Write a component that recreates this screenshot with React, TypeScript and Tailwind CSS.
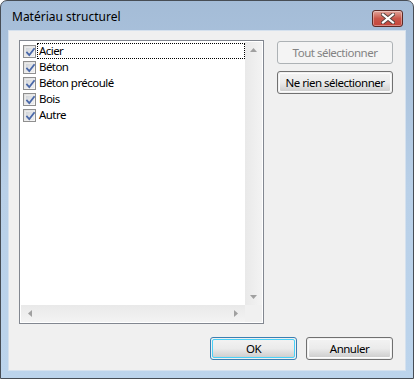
import React from "react";

const font = { fontFamily: '"Noto Sans", "Open Sans", Arial, sans-serif' };

function Check() {
  return (
    <span className="relative inline-block w-[13px] h-[13px] border border-[#8f8f8f] bg-gradient-to-br from-[#dcdcdc] to-[#fafafa] shrink-0">
      <span className="absolute inset-[1px] border border-[#e9e9e9] bg-gradient-to-br from-[#cfd3d8] to-[#f4f4f4]" />
      <svg className="absolute left-[1px] top-[1px]" width="11" height="11" viewBox="0 0 11 11">
        <path d="M2 5.5 L4.3 8 L9 2" fill="none" stroke="#4a68a8" strokeWidth="1.8" strokeLinecap="square" />
      </svg>
    </span>
  );
}

function Btn({ children, w, disabled, def }: { children: React.ReactNode; w: string; disabled?: boolean; def?: boolean }) {
  if (disabled) {
    return (
      <div className={`${w} h-[23px] rounded-[3px] border border-[#adb2b5] bg-[#f4f4f4] flex items-center justify-center text-[11.5px] tracking-[-0.5px] whitespace-nowrap text-[#838383]`}>
        {children}
      </div>
    );
  }
  return (
    <div
      className={`${w} h-[23px] rounded-[3px] border ${def ? "border-[#3c7fb1]" : "border-[#707070]"} p-[1px] flex`}
    >
      <div
        className={`flex-1 rounded-[2px] ${def ? "border border-[#48d1f9]" : "border border-[#fcfcfc]"} bg-gradient-to-b from-[#f2f2f2] via-[#ebebeb] to-[#cfcfcf] flex items-center justify-center text-[11.5px] tracking-[-0.5px] whitespace-nowrap text-black`}
      >
        {children}
      </div>
    </div>
  );
}

export default function App() {
  const items = ["Acier", "Béton", "Béton précoulé", "Bois", "Autre"];
  return (
    <div style={font} className="w-[414px] h-[379px] bg-white">
      <div className="w-[414px] h-[379px] rounded-t-[7px] border border-[#474d55] bg-gradient-to-b from-[#a4bcd7] via-[#b9d0e8] to-[#bcd4ec] flex flex-col">
        <div className="h-[29px] flex items-start justify-between pl-[11px] pr-[10px] shrink-0">
          <span className="text-[12px] text-black mt-[8px] leading-[16px]">Matériau structurel</span>
          <div className="mt-[9px] w-[31px] h-[17px] rounded-[3px] border border-[#5c2a26] bg-gradient-to-b from-[#e0a59c] via-[#c9564a] to-[#c4453b] flex items-center justify-center shadow-[inset_0_0_0_1px_rgba(255,255,255,0.35)]">
            <svg width="14" height="11" viewBox="0 0 14 11">
              <path d="M2 1.5 L12 9.5 M12 1.5 L2 9.5" stroke="#55423f" strokeWidth="4" strokeLinecap="square" />
              <path d="M2 1.5 L12 9.5 M12 1.5 L2 9.5" stroke="#ffffff" strokeWidth="2.2" strokeLinecap="square" />
            </svg>
          </div>
        </div>
        <div className="mx-[7px] h-[341px] border border-[#d5e1ee] bg-[#f0f0f0] flex flex-col pt-[9px] pl-[10px] pr-[12px] shrink-0">
          <div className="flex gap-[13px]">
            <div className="w-[245px] h-[284px] border border-[#828790] bg-white grid grid-cols-[1fr_17px] grid-rows-[1fr_17px] p-[1px]">
              <div className="pt-[1px] text-[11.5px] tracking-[-0.55px] text-black">
                {items.map((t, i) => (
                  <div key={t} className="h-[16px] flex items-center pl-[2px]">
                    <Check />
                    <span
                      className={`ml-[1px] h-[16px] flex-1 flex items-center pl-[1px] leading-[14px] ${i === 0 ? "border border-dotted border-black" : "border border-transparent"}`}
                    >
                      {t}
                    </span>
                  </div>
                ))}
              </div>
              <div className="bg-gradient-to-r from-[#e9e9e9] to-[#f3f3f3] flex flex-col items-center justify-between py-[6px]">
                <svg width="7" height="4" viewBox="0 0 7 4"><path d="M3.5 0 L7 4 L0 4 Z" fill="#a0a0a0" /></svg>
                <svg width="7" height="4" viewBox="0 0 7 4"><path d="M0 0 L7 0 L3.5 4 Z" fill="#a0a0a0" /></svg>
              </div>
              <div className="bg-gradient-to-b from-[#e9e9e9] to-[#f3f3f3] flex items-center justify-between px-[7px]">
                <svg width="4" height="7" viewBox="0 0 4 7"><path d="M4 0 L4 7 L0 3.5 Z" fill="#a0a0a0" /></svg>
                <svg width="4" height="7" viewBox="0 0 4 7"><path d="M0 0 L0 7 L4 3.5 Z" fill="#a0a0a0" /></svg>
              </div>
              <div className="bg-[#f0f0f0]" />
            </div>
            <div className="w-[116px] flex flex-col gap-[7px] pt-[1px]">
              <Btn w="w-[116px]" disabled>Tout sélectionner</Btn>
              <Btn w="w-[116px]">Ne rien sélectionner</Btn>
            </div>
          </div>
          <div className="mt-[13px] flex justify-end gap-[9px]">
            <Btn w="w-[87px]" def>OK</Btn>
            <Btn w="w-[87px]">Annuler</Btn>
          </div>
        </div>
      </div>
    </div>
  );
}
